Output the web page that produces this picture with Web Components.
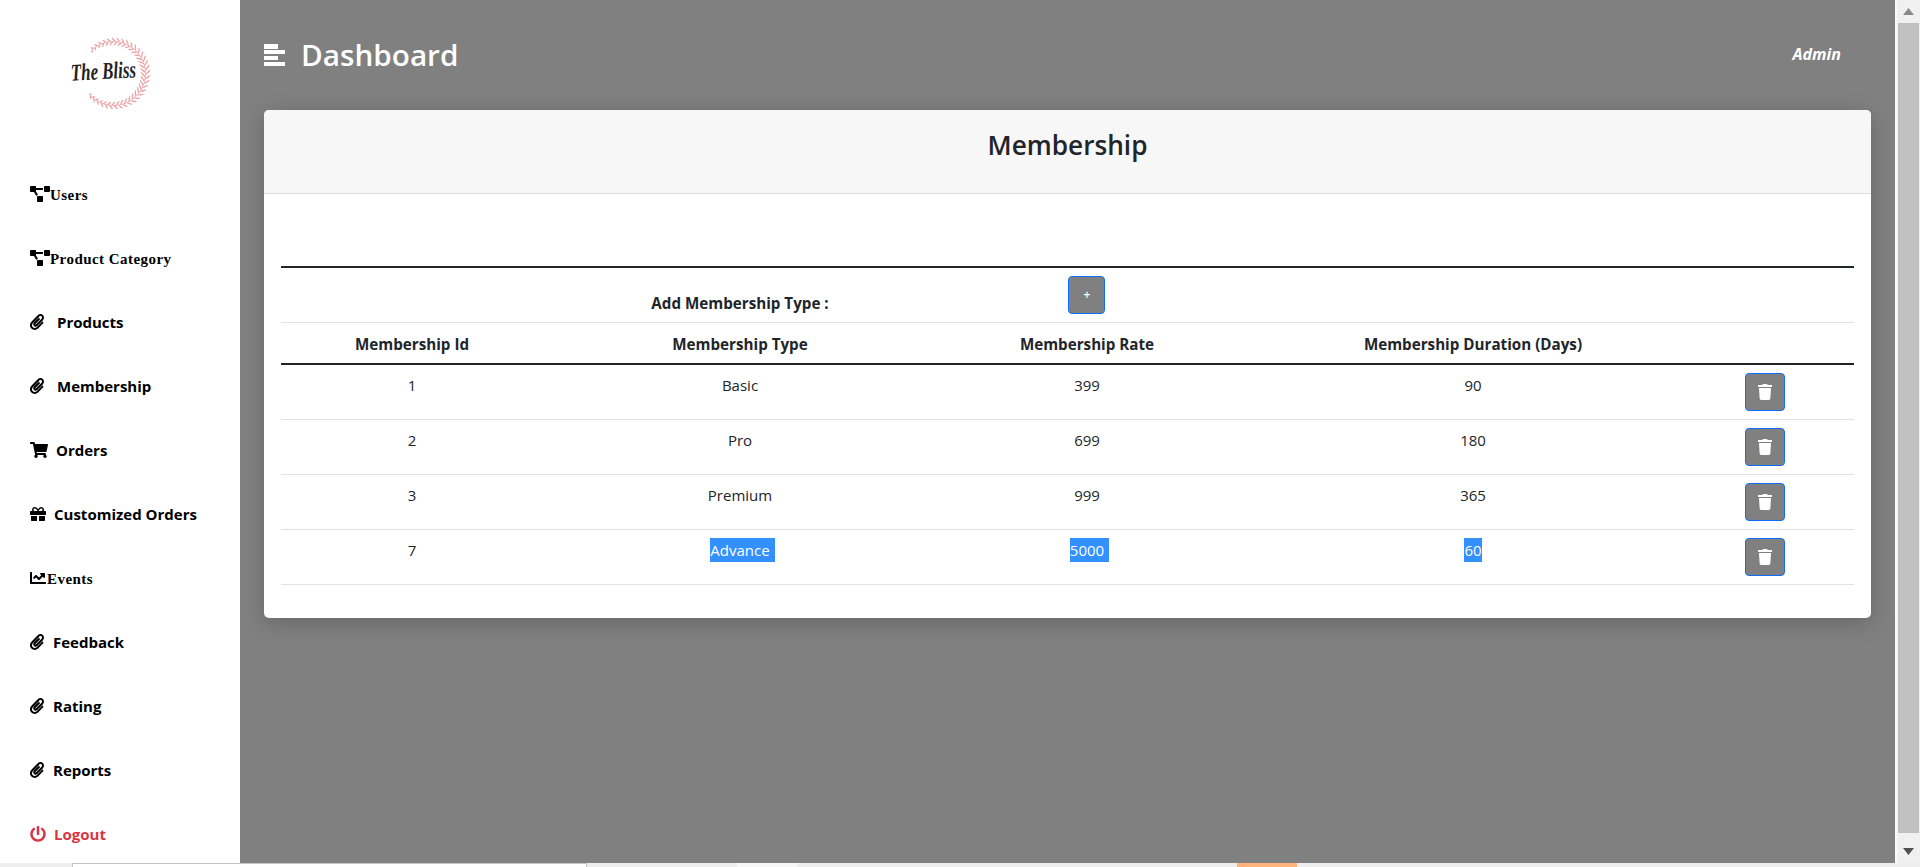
<!DOCTYPE html>
<html lang="en"><head><meta charset="utf-8"><title>Dashboard</title>
<style>html,body{margin:0;height:100%;overflow:hidden;background:#808080}</style></head>
<body>
<x-app>
  <x-sidebar slot="side">
    <x-nav icon="diagram" serif gap="0">Users</x-nav>
    <x-nav icon="diagram" serif gap="0">Product Category</x-nav>
    <x-nav icon="clip" gap="13">Products</x-nav>
    <x-nav icon="clip" gap="13">Membership</x-nav>
    <x-nav icon="cart" gap="8">Orders</x-nav>
    <x-nav icon="gift" gap="8">Customized Orders</x-nav>
    <x-nav icon="chart" serif gap="1">Events</x-nav>
    <x-nav icon="clip" gap="9">Feedback</x-nav>
    <x-nav icon="clip" gap="9">Rating</x-nav>
    <x-nav icon="clip" gap="9">Reports</x-nav>
    <x-nav icon="power" gap="8" danger>Logout</x-nav>
  </x-sidebar>
  <x-topbar slot="main" title="Dashboard" user="Admin"></x-topbar>
  <x-card slot="main" heading="Membership"><x-member-table></x-member-table></x-card>
  <x-scrollbar slot="bar"></x-scrollbar>
  <x-strip slot="strip"></x-strip>
</x-app>
<script>
const ICONS={
diagram:[640,512,'M384 320H256c-17.67 0-32 14.33-32 32v128c0 17.67 14.33 32 32 32h128c17.67 0 32-14.33 32-32V352c0-17.67-14.33-32-32-32zM192 32c0-17.67-14.33-32-32-32H32C14.33 0 0 14.33 0 32v128c0 17.67 14.33 32 32 32h95.72l73.16 128.04C211.98 300.98 232.4 288 256 288h.28L192 175.51V128h224V64H192V32zM608 0H480c-17.67 0-32 14.33-32 32v128c0 17.67 14.33 32 32 32h128c17.67 0 32-14.33 32-32V32c0-17.67-14.33-32-32-32z',20,16],
clip:[448,512,'M43.246 466.142c-58.43-60.289-57.341-157.511 1.386-217.581L254.392 34c44.316-45.332 116.351-45.336 160.671 0 43.89 44.894 43.943 117.329 0 162.276L232.214 383.128c-29.855 30.537-78.633 30.111-107.982-.998-28.275-29.97-27.368-77.473 1.452-106.953l143.743-146.835c6.182-6.314 16.312-6.422 22.626-.241l22.861 22.379c6.315 6.182 6.422 16.312.241 22.626L171.427 319.927c-4.932 5.045-5.236 13.428-.648 18.292 4.372 4.634 11.245 4.711 15.688.165l182.849-186.851c19.613-20.062 19.613-52.725-.011-72.798-19.189-19.627-49.957-19.637-69.154 0L90.39 293.295c-34.763 35.56-35.299 93.12-1.191 128.313 34.01 35.093 88.985 35.137 123.058.286l172.06-175.999c6.177-6.319 16.307-6.433 22.626-.256l22.877 22.364c6.319 6.177 6.434 16.307.256 22.626l-172.06 175.998c-59.576 60.938-155.943 60.216-214.77-.485z',14,16],
cart:[576,512,'M528.12 301.319l47.273-208C578.806 78.301 567.391 64 551.99 64H159.208l-9.166-44.81C147.758 8.021 137.93 0 126.529 0H24C10.745 0 0 10.745 0 24v16c0 13.255 10.745 24 24 24h69.883l70.248 343.435C147.325 417.1 136 435.222 136 456c0 30.928 25.072 56 56 56s56-25.072 56-56c0-15.674-6.447-29.835-16.824-40h209.647C430.447 426.165 424 440.326 424 456c0 30.928 25.072 56 56 56s56-25.072 56-56c0-22.172-12.888-41.332-31.579-50.405l5.517-24.276c3.413-15.018-8.002-29.319-23.403-29.319H218.117l-6.545-32h293.145c11.206 0 20.92-7.754 23.403-18.681z',18,16],
gift:[512,512,'M32 448c0 17.7 14.3 32 32 32h160V320H32v128zm256 32h160c17.7 0 32-14.3 32-32V320H288v160zm192-320h-42.1c6.2-12.1 10.1-25.5 10.1-40 0-48.5-39.5-88-88-88-41.6 0-68.5 21.3-103 68.3-34.5-47-61.4-68.3-103-68.3-48.5 0-88 39.5-88 88 0 14.5 3.8 27.9 10.1 40H32c-17.7 0-32 14.3-32 32v80c0 8.8 7.2 16 16 16h480c8.8 0 16-7.2 16-16v-80c0-17.7-14.3-32-32-32zm-326.1 0c-22.1 0-40-17.9-40-40s17.9-40 40-40c19.9 0 34.6 3.3 86.1 80h-86.1zm206.1 0h-86.1c51.4-76.5 65.7-80 86.1-80 22.1 0 40 17.9 40 40s-17.9 40-40 40z',16,16],
chart:[512,512,'M496 384H64V80c0-8.84-7.16-16-16-16H16C7.16 64 0 71.16 0 80v336c0 17.67 14.33 32 32 32h464c8.84 0 16-7.16 16-16v-32c0-8.84-7.16-16-16-16zM464 96H345.94c-21.38 0-32.09 25.85-16.97 40.97l32.4 32.4L288 242.75l-73.37-73.37c-12.5-12.5-32.76-12.5-45.25 0l-68.69 68.69c-6.25 6.25-6.25 16.38 0 22.63l22.62 22.62c6.25 6.25 16.38 6.25 22.63 0L192 237.25l73.37 73.37c12.5 12.5 32.76 12.5 45.25 0l96-96 32.4 32.4c15.12 15.12 40.97 4.41 40.97-16.97V112c.01-8.84-7.15-16-15.99-16z',16,16],
power:[512,512,'M400 54.1c63 45 104 118.6 104 201.9 0 136.8-110.8 247.7-247.5 248C120 504.3 8.2 393 8 256.4 7.9 173.1 48.9 99.3 111.8 54.2c11.7-8.3 28-4.8 35 7.7L162.6 90c5.9 10.5 3.1 23.8-6.6 31-41.5 30.8-68 79.6-68 134.9-.1 92.3 74.5 168.1 168 168.1 91.6 0 168.6-74.2 168-169.1-.3-51.8-24.7-101.8-68.1-134-9.7-7.2-12.4-20.5-6.4-30.9l15.8-28.1c7-12.4 23.2-16.1 34.7-7.9zM296 264V24c0-13.3-10.7-24-24-24h-32c-13.3 0-24 10.7-24 24v240c0 13.3 10.7 24 24 24h32c13.3 0 24-10.7 24-24z',16,16],
trash:[448,512,'M432 32H312l-9.4-18.7A24 24 0 0 0 281.1 0H166.8a23.72 23.72 0 0 0-21.4 13.3L136 32H16A16 16 0 0 0 0 48v32a16 16 0 0 0 16 16h416a16 16 0 0 0 16-16V48a16 16 0 0 0-16-16zM53.2 467a48 48 0 0 0 47.9 45h245.8a48 48 0 0 0 47.9-45L416 128H32z',14,16]
};
const svgIcon=n=>{const i=ICONS[n];return `<svg width="${i[3]}" height="${i[4]}" viewBox="0 0 ${i[0]} ${i[1]}" fill="currentColor" aria-hidden="true"><path d="${i[2]}"/></svg>`};
const SANS='"Open Sans","Noto Sans",sans-serif';

class Base extends HTMLElement{
  render(html){this.attachShadow({mode:'open'}).innerHTML=html}
}
customElements.define('x-app',class extends Base{constructor(){super();this.render(`<style>
:host{display:grid;grid-template-columns:240px 1fr 25px;grid-template-rows:863px 4px;width:1920px;height:867px;font-family:${SANS}}
.side{grid-row:1;grid-column:1;background:#fff;overflow:hidden}
.main{grid-row:1;grid-column:2;background:#808080;padding:0 24px;overflow:hidden}
.bar{grid-row:1;grid-column:3}
.strip{grid-row:2;grid-column:1/4}
</style><div class="side"><slot name="side"></slot></div><div class="main"><slot name="main"></slot></div><div class="bar"><slot name="bar"></slot></div><div class="strip"><slot name="strip"></slot></div>`)}});

customElements.define('x-sidebar',class extends Base{constructor(){super();
 let leaves='';const cx=113.5,cy=73.5,r=32,A=-44,B=229;
 for(let a=A;a<=B;a+=4){
  const p=(a-A)/(B-A),size=0.55+0.6*Math.sin(p*Math.PI);
  const t=(a-90)*Math.PI/180,x=cx+r*Math.cos(t),y=cy+r*Math.sin(t);
  const d=(Math.round((a-A)/4))%2===0?-1:1,o=2.2*size;
  const lx=(x+d*o*Math.cos(t)).toFixed(1),ly=(y+d*o*Math.sin(t)).toFixed(1);
  leaves+=`<ellipse cx="${lx}" cy="${ly}" rx="${(2.9*size).toFixed(1)}" ry="0.7" transform="rotate(${(a+d*45).toFixed(0)} ${lx} ${ly})" fill="#ea9fa4"/>`}
 const s=(a)=>{const t=(a-90)*Math.PI/180;return (cx+r*Math.cos(t)).toFixed(1)+' '+(cy+r*Math.sin(t)).toFixed(1)};
 this.render(`<style>:host{display:block}.logo{display:block;height:162px;width:240px}nav{display:block}</style>
 <svg class="logo" viewBox="0 0 240 162" role="img" aria-label="The Bliss logo">
  <path d="M${s(A)} A${r} ${r} 0 1 1 ${s(B)}" fill="none" stroke="#eeb0b4" stroke-width="1"/>${leaves}
  <text x="71" y="79" transform="rotate(-3 104 74)" font-family="Liberation Serif" font-style="italic" font-weight="700" font-size="24" textLength="65" lengthAdjust="spacingAndGlyphs" fill="#222">The Bliss</text>
 </svg><nav><slot></slot></nav>`)}});

customElements.define('x-nav',class extends Base{constructor(){super();this.attachShadow({mode:'open'})}
 connectedCallback(){const serif=this.hasAttribute('serif');
  this.shadowRoot.innerHTML=`<style>
  :host{display:flex;align-items:center;height:64px;padding-left:30px;box-sizing:border-box;color:${this.hasAttribute('danger')?'#dc3545':'#000'};
   font:${serif?'700 15px "Liberation Serif",serif':`700 15px ${SANS}`};white-space:nowrap;${serif?'letter-spacing:.45px;':''}}
  svg{flex:none;display:block}span{margin-left:${this.getAttribute('gap')}px;${serif?'position:relative;top:1px;':''}}
  </style>${svgIcon(this.getAttribute('icon'))}<span><slot></slot></span>`}});

customElements.define('x-topbar',class extends Base{constructor(){super();this.attachShadow({mode:'open'})}
 connectedCallback(){this.shadowRoot.innerHTML=`<style>
 :host{display:flex;align-items:center;height:110px;color:#fff}
 svg{display:block;flex:none;margin-right:16px}
 h1{margin:0;font:600 29.7px/1.2 ${SANS};flex:1}
 i{font:italic 700 16px ${SANS};margin-right:30px;position:relative;top:-1px}
 </style><svg width="21" height="22" viewBox="0 0 21 22" fill="#fff"><rect width="14" height="5"/><rect y="6" width="21" height="4"/><rect y="12" width="14" height="4"/><rect y="18" width="21" height="4"/></svg><h1>${this.getAttribute('title')}</h1><i>${this.getAttribute('user')}</i>`}});

customElements.define('x-card',class extends Base{constructor(){super();this.attachShadow({mode:'open'})}
 connectedCallback(){this.shadowRoot.innerHTML=`<style>
 :host{display:block;background:#fff;border-radius:5px;box-shadow:0 5px 22px rgba(0,0,0,.2);color:#212529;overflow:hidden;height:508px}
 header{box-sizing:border-box;height:84px;background:#f7f7f7;border-bottom:1px solid #dcdcdc;display:flex;align-items:center;justify-content:center}
 h2{margin:0;font:600 26.2px/1.2 ${SANS};position:relative;top:-6px}
 .body{padding:72px 17px 0}
 </style><header><h2>${this.getAttribute('heading')}</h2></header><div class="body"><slot></slot></div>`}});

customElements.define('x-btn',class extends Base{constructor(){super();this.attachShadow({mode:'open'})}
 connectedCallback(){const w=this.getAttribute('w');this.shadowRoot.innerHTML=`<style>
 :host{display:inline-block;vertical-align:top}
 button{box-sizing:border-box;display:flex;align-items:center;justify-content:center;width:${w}px;height:38px;padding:0;background:#808080;border:1px solid #0d6efd;border-radius:4px;color:#fff;font:600 12px ${SANS}}
 </style><button type="button">${this.hasAttribute('del')?svgIcon('trash'):'<span style="position:relative;top:-1px;left:1px">+</span>'}</button>`}});

customElements.define('x-member-table',class extends Base{constructor(){super();
 const rows=[[1,'Basic',399,90],[2,'Pro',699,180],[3,'Premium',999,365],[7,'Advance',5000,60]];
 const body=rows.map((r,i)=>{const c=(v,tr)=>i===3?`<mark class="${tr?'tr':''}">${v}</mark>`:v;
  return `<tr><td>${r[0]}</td><td>${c(r[1],1)}</td><td>${c(r[2],1)}</td><td>${c(r[3])}</td><td class="act"><x-btn w="40" del></x-btn></td></tr>`}).join('');
 this.render(`<style>
 :host{display:block}
 table{table-layout:fixed;width:1573px;border-collapse:separate;border-spacing:0;font:400 15px/24px ${SANS};color:#212529}
 th,td{padding:8px;text-align:center;vertical-align:top;border-bottom:1px solid #dee2e6;font-weight:400;box-sizing:content-box}
 th{font-weight:700;font-size:15.2px}
 .add th,.add td{border-top:2px solid #212529}
 .add th{padding:23px 8px 7px}
 .add x-btn{margin-left:-2px}
 .head th{border-bottom:2px solid #212529;padding:9px 8px 7px}
 .act{text-align:left;padding-left:36px}
 mark{display:inline-block;background:#3390ff;color:#fff;line-height:24px}
 mark.tr{padding-right:5px;margin-right:-5px}
 </style><table><colgroup><col style="width:262px"><col style="width:394px"><col style="width:300px"><col style="width:472px"><col style="width:145px"></colgroup>
 <thead><tr class="add"><th></th><th>Add Membership Type :</th><td><x-btn w="37"></x-btn></td><td></td><td></td></tr>
 <tr class="head"><th>Membership Id</th><th>Membership Type</th><th>Membership Rate</th><th>Membership Duration (Days)</th><th></th></tr></thead>
 <tbody>${body}</tbody></table>`)}});

customElements.define('x-scrollbar',class extends Base{constructor(){super();this.render(`<style>
 :host{display:flex;flex-direction:column;align-items:center;height:100%;background:#f0f0f0;border-left:2px solid #fafafa;box-sizing:border-box}
 .a{flex:none;height:23px;display:flex;align-items:center;justify-content:center;color:#606060}
 .t{flex:none;width:21px;height:810px;background:#c0c0c0}
 .s{flex:1}
 </style><div class="a"><svg width="11" height="7" viewBox="0 0 11 7" fill="#8a8a8a"><path d="M5.5 0L11 7H0z"/></svg></div><div class="t"></div><div class="s"></div><div class="a"><svg width="11" height="7" viewBox="0 0 11 7" fill="#505050"><path d="M5.5 7L11 0H0z"/></svg></div>`)}});

customElements.define('x-strip',class extends Base{constructor(){super();this.render(`<style>
 :host{display:flex;height:4px;background:#eee}
 div{flex:none}
 .input{width:515px;background:#fff;border:solid #c4c4c4;border-width:1px 1px 0;margin-left:72px;box-sizing:border-box}
 .g{width:150px}.l{width:60px;background:#f7f7f7}.g2{width:440px}.o{width:60px;background:#ffb27a}
 </style><div class="input"></div><div class="g"></div><div class="l"></div><div class="g2"></div><div class="o"></div>`)}});
</script>
</body></html>
